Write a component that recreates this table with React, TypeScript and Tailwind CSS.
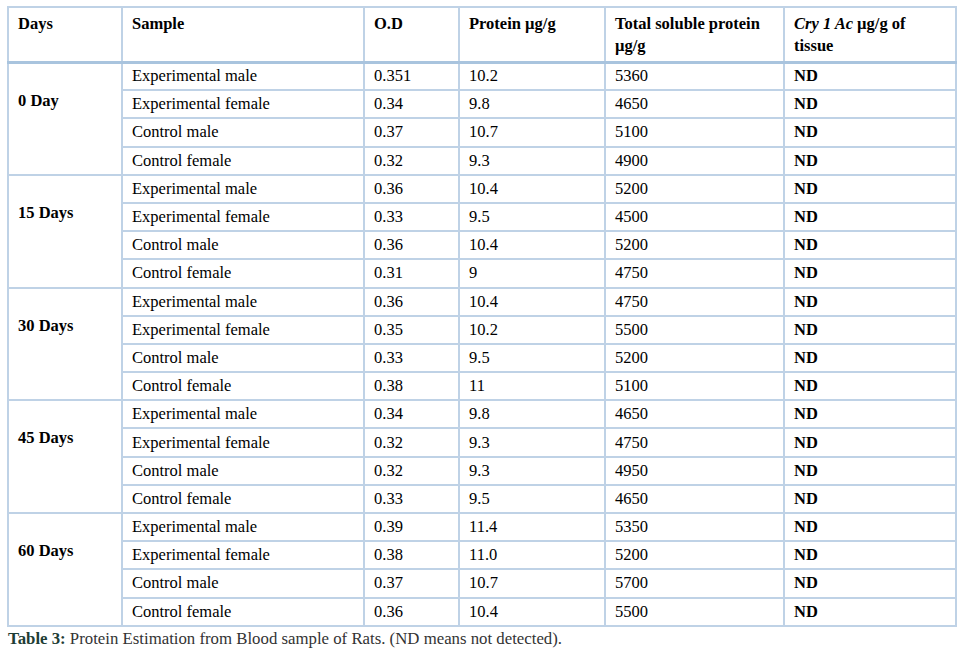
import React from "react";

type Row = { sample: string; od: string; protein: string; total: string };
type Group = { day: string; rows: Row[] };

const groups: Group[] = [
  {
    day: "0 Day",
    rows: [
      { sample: "Experimental male", od: "0.351", protein: "10.2", total: "5360" },
      { sample: "Experimental female", od: "0.34", protein: "9.8", total: "4650" },
      { sample: "Control male", od: "0.37", protein: "10.7", total: "5100" },
      { sample: "Control female", od: "0.32", protein: "9.3", total: "4900" },
    ],
  },
  {
    day: "15 Days",
    rows: [
      { sample: "Experimental male", od: "0.36", protein: "10.4", total: "5200" },
      { sample: "Experimental female", od: "0.33", protein: "9.5", total: "4500" },
      { sample: "Control male", od: "0.36", protein: "10.4", total: "5200" },
      { sample: "Control female", od: "0.31", protein: "9", total: "4750" },
    ],
  },
  {
    day: "30 Days",
    rows: [
      { sample: "Experimental male", od: "0.36", protein: "10.4", total: "4750" },
      { sample: "Experimental female", od: "0.35", protein: "10.2", total: "5500" },
      { sample: "Control male", od: "0.33", protein: "9.5", total: "5200" },
      { sample: "Control female", od: "0.38", protein: "11", total: "5100" },
    ],
  },
  {
    day: "45 Days",
    rows: [
      { sample: "Experimental male", od: "0.34", protein: "9.8", total: "4650" },
      { sample: "Experimental female", od: "0.32", protein: "9.3", total: "4750" },
      { sample: "Control male", od: "0.32", protein: "9.3", total: "4950" },
      { sample: "Control female", od: "0.33", protein: "9.5", total: "4650" },
    ],
  },
  {
    day: "60 Days",
    rows: [
      { sample: "Experimental male", od: "0.39", protein: "11.4", total: "5350" },
      { sample: "Experimental female", od: "0.38", protein: "11.0", total: "5200" },
      { sample: "Control male", od: "0.37", protein: "10.7", total: "5700" },
      { sample: "Control female", od: "0.36", protein: "10.4", total: "5500" },
    ],
  },
];

const cell = "border-2 border-[#bfd2e6] px-[9px] h-[28.2px] align-middle leading-[20px]";
const head = "border-2 border-[#bfd2e6] border-b-[3px] border-b-[#a9c4de] px-[9px] pt-[5px] align-top leading-[22px] font-bold h-[55px] text-left";

export default function App() {
  return (
    <div className="bg-white w-[965px] h-[653px] pt-[6px] pl-[7px] text-[16.5px] text-black font-['Liberation_Serif',serif]">
      <table className="border-collapse table-fixed w-[948px]">
        <colgroup>
          <col className="w-[114px]" />
          <col className="w-[242px]" />
          <col className="w-[95px]" />
          <col className="w-[146px]" />
          <col className="w-[179px]" />
          <col className="w-[172px]" />
        </colgroup>
        <thead>
          <tr>
            <th className={head}>Days</th>
            <th className={head}>Sample</th>
            <th className={head}>O.D</th>
            <th className={head}>Protein µg/g</th>
            <th className={head}>
              Total soluble protein
              <br />
              µg/g
            </th>
            <th className={head}>
              <i>Cry 1 Ac</i> µg/g of
              <br />
              tissue
            </th>
          </tr>
        </thead>
        <tbody>
          {groups.map((g) =>
            g.rows.map((r, i) => (
              <tr key={g.day + r.sample}>
                {i === 0 && (
                  <td rowSpan={4} className="border-2 border-[#bfd2e6] px-[9px] pt-[27px] align-top font-bold leading-[20px]">
                    {g.day}
                  </td>
                )}
                <td className={cell}>{r.sample}</td>
                <td className={cell}>{r.od}</td>
                <td className={cell}>{r.protein}</td>
                <td className={cell}>{r.total}</td>
                <td className={cell + " font-bold"}>ND</td>
              </tr>
            ))
          )}
        </tbody>
      </table>
      <p className="mt-[2px] pl-[1px] text-[16.8px] leading-[20px] text-[#333]">
        <span className="font-bold text-[#1e3d35]">Table 3:</span> Protein Estimation from Blood sample of Rats. (ND means not detected).
      </p>
    </div>
  );
}
